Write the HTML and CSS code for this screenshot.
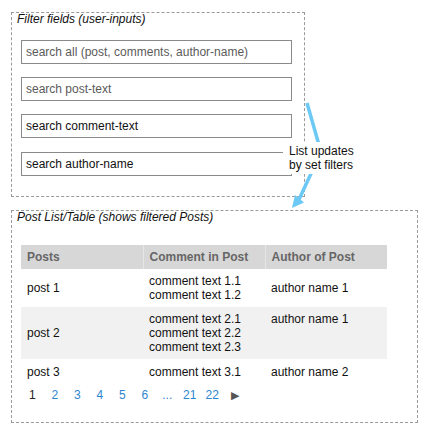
FILE: index.html
```html
<!DOCTYPE html>
<html lang="en">

<head>
    <meta charset="UTF-8" />
    <title>Filter fields and post list</title>
    <link rel="stylesheet" href="styles.css">
</head>

<body>

    <section class="panel filters">
        <h2 class="panel-title">Filter fields (user-inputs)</h2>
        <input class="search" type="text" placeholder="search all (post, comments, author-name)">
        <input class="search" type="text" placeholder="search post-text">
        <input class="search" type="text" value="search comment-text">
        <input class="search" type="text" value="search author-name">
    </section>

    <section class="panel posts">
        <h2 class="panel-title">Post List/Table (shows filtered Posts)</h2>

        <table class="post-table">
            <tr>
                <th>Posts</th>
                <th>Comment in Post</th>
                <th>Author of Post</th>
            </tr>
            <tr>
                <td>post 1</td>
                <td>comment text 1.1<br>comment text 1.2</td>
                <td>author name 1</td>
            </tr>
            <tr class="shaded">
                <td>post 2</td>
                <td>comment text 2.1<br>comment text 2.2<br>comment text 2.3</td>
                <td class="top">author name 1</td>
            </tr>
            <tr>
                <td>post 3</td>
                <td>comment text 3.1</td>
                <td>author name 2</td>
            </tr>
        </table>

        <nav class="pager">
            <span class="current">1</span>
            <a href="#">2</a>
            <a href="#">3</a>
            <a href="#">4</a>
            <a href="#">5</a>
            <a href="#">6</a>
            <a href="#">...</a>
            <a href="#">21</a>
            <a href="#">22</a>
            <span class="next">&#9654;</span>
        </nav>
    </section>

    <!-- annotation: arrow from filters to list -->
    <svg class="arrow" width="429" height="435" viewBox="0 0 429 435">
        <line x1="307" y1="103" x2="321" y2="152" stroke="#6cc9f5" stroke-width="3.5" />
        <line x1="321" y1="152" x2="299" y2="199.5" stroke="#6cc9f5" stroke-width="3.5" />
        <polygon points="292,208 304,202.5 295,195" fill="#6cc9f5" />
    </svg>

    <div class="note">List updates<br>by set filters</div>

</body>

</html>
```

FILE: styles.css
```css
body {
    margin: 0;
    padding: 12px 0 0 11px;
    font-family: "Liberation Sans", Arial, sans-serif;
    font-size: 12px;
    color: #111;
}

.panel {
    box-sizing: border-box;
    border: 1px dashed #9a9a9a;
}

.panel-title {
    margin: 0;
    padding-left: 5px;
    font-size: 12px;
    font-weight: normal;
    font-style: italic;
    line-height: 13px;
}

.filters {
    width: 294px;
    height: 185px;
    display: flex;
    flex-direction: column;
    gap: 13px;
}

.filters .panel-title {
    margin-bottom: 1px;
}

.search {
    box-sizing: border-box;
    width: 271px;
    height: 24px;
    margin: 0 0 0 9px;
    padding: 0 0 0 4px;
    border: 1px solid #8a8a8a;
    border-radius: 0;
    font-family: "Liberation Sans", Arial, sans-serif;
    font-size: 12px;
    color: #111;
    outline: none;
}

.search::placeholder {
    color: #5a5a5a;
}

.search:last-child {
    margin-top: 1px;
}

.posts {
    width: 407px;
    height: 213px;
    margin-top: 13px;
}

.post-table {
    margin: 21px 0 0 9px;
    width: 366px;
    border-collapse: collapse;
    table-layout: fixed;
    line-height: 14px;
}

.post-table th {
    height: 24px;
    padding: 0 6px;
    background-color: #d7d7d7;
    color: #666;
    text-align: left;
    border-left: 1px solid #e6e6e6;
}

.post-table th:first-child {
    border-left: none;
}

.post-table td {
    padding: 5px 6px;
    vertical-align: middle;
}

.post-table tr:last-child td {
    padding-top: 6px;
}

.post-table tr.shaded td {
    background-color: #f1f1f1;
}

.post-table td.top {
    vertical-align: top;
}

.pager {
    display: flex;
    margin: 2px 0 0 9px;
    line-height: 18px;
}

.pager a,
.pager span {
    width: 22.5px;
    text-align: center;
    color: #2f86cf;
    text-decoration: none;
}

.pager .current {
    color: #222;
}

.pager .next {
    color: #555;
    font-size: 11px;
}

.arrow {
    position: absolute;
    left: 0;
    top: 0;
    pointer-events: none;
}

.note {
    position: absolute;
    left: 283px;
    top: 142px;
    padding: 2px 4px 2px 6px;
    background-color: #fff;
    line-height: 14px;
}
```
